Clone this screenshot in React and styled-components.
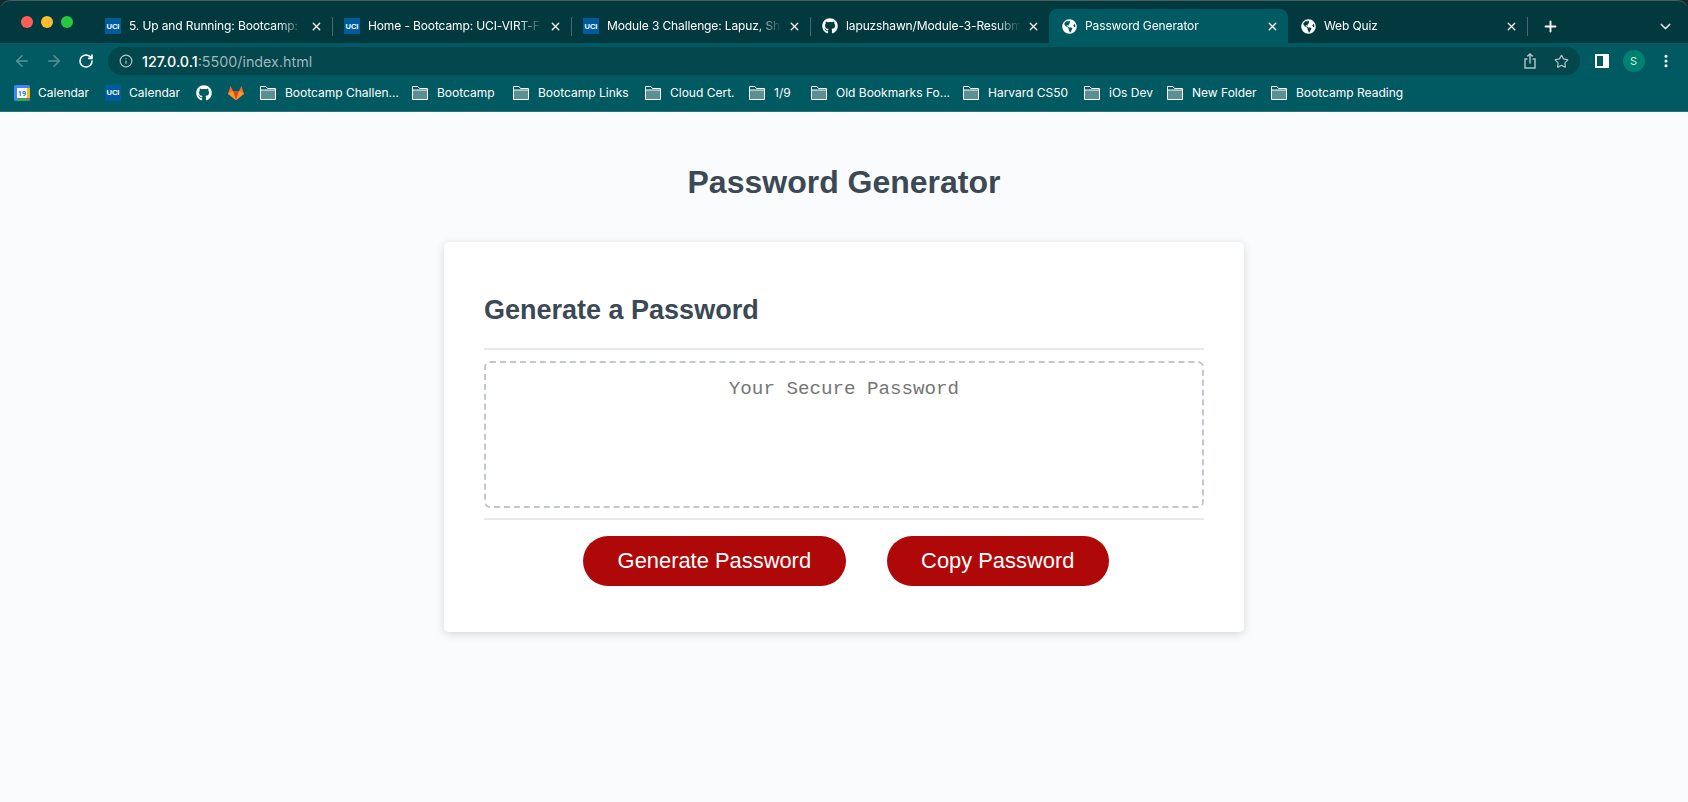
import styled, { createGlobalStyle } from 'styled-components';
import { ArrowLeft, ArrowRight, RotateCw, Info, Star, X, Plus, ChevronDown, EllipsisVertical } from 'lucide-react';
import { FaGithub, FaGlobeAmericas } from 'react-icons/fa';

const GlobalStyle = createGlobalStyle`
  html, body {
    margin: 0;
    padding: 0;
    background: #f9fbfd;
  }
  * {
    box-sizing: border-box;
  }
`;

const TABS = [
  { icon: 'uci', title: '5. Up and Running: Bootcamp:' },
  { icon: 'uci', title: 'Home - Bootcamp: UCI-VIRT-F' },
  { icon: 'uci', title: 'Module 3 Challenge: Lapuz, Sh' },
  { icon: 'github', title: 'lapuzshawn/Module-3-Resubm' },
  { icon: 'globe', title: 'Password Generator', active: true },
  { icon: 'globe', title: 'Web Quiz' },
];

const BOOKMARKS = [
  { icon: 'calendar', title: 'Calendar', width: 91 },
  { icon: 'uci', title: 'Calendar', width: 91 },
  { icon: 'github', width: 32 },
  { icon: 'gitlab', width: 32 },
  { icon: 'folder', title: 'Bootcamp Challen...', width: 152 },
  { icon: 'folder', title: 'Bootcamp', width: 101 },
  { icon: 'folder', title: 'Bootcamp Links', width: 132 },
  { icon: 'folder', title: 'Cloud Cert.', width: 104 },
  { icon: 'folder', title: '1/9', width: 62 },
  { icon: 'folder', title: 'Old Bookmarks Fo...', width: 152 },
  { icon: 'folder', title: 'Harvard CS50', width: 121 },
  { icon: 'folder', title: 'iOs Dev', width: 83 },
  { icon: 'folder', title: 'New Folder', width: 104 },
  { icon: 'folder', title: 'Bootcamp Reading' },
];

function FolderIcon() {
  return (
    <svg width="17" height="14" viewBox="0 0 17 14">
      <path d="M0.5 4 H15.5 V13.5 H0.5 Z" fill="#5b8f93" />
      <path d="M0.5 13.5 V0.5 H6 L7.5 2.5 H15.5 V13.5 Z M0.5 4 H15.5" fill="none" stroke="#ffffff" strokeWidth="1" />
    </svg>
  );
}

function GitlabIcon() {
  return (
    <svg width="16" height="16" viewBox="0 0 16 16">
      <path d="M8 15.2 L0.4 9.6 C0 9.3 -0.1 8.8 0.1 8.4 L2.6 1 L5 6.2 H11 L13.4 1 L15.9 8.4 C16.1 8.8 16 9.3 15.6 9.6 Z" fill="#fc6d26" />
      <path d="M8 15.2 L5 6.2 H11 Z" fill="#e24329" />
      <path d="M0.2 8.2 L5 6.2 L8 15.2 Z" fill="#fca326" opacity="0.85" />
      <path d="M15.8 8.2 L11 6.2 L8 15.2 Z" fill="#fca326" opacity="0.85" />
    </svg>
  );
}

function CalendarIcon() {
  return (
    <svg width="16" height="16" viewBox="0 0 16 16">
      <rect width="16" height="16" rx="1.5" fill="#4285f4" />
      <rect x="3" y="3" width="10" height="10" fill="#ffffff" />
      <path d="M3 13 H13 V16 H3 Z" fill="#34a853" />
      <path d="M13 3 H16 V13 H13 Z" fill="#fbbc04" />
      <path d="M13 13 H16 L13 16 Z" fill="#ea4335" />
      <text x="8" y="11" fontSize="7.5" fontWeight="700" textAnchor="middle" fontFamily="Roboto, sans-serif" fill="#1a73e8">19</text>
    </svg>
  );
}

function ShareIcon() {
  return (
    <svg width="14" height="16" viewBox="0 0 14 16" fill="none" stroke="#a9bfc2" strokeWidth="1.5">
      <path d="M4.5 6 H2 V15 H12 V6 H9.5" />
      <path d="M7 10.5 V1 M4.3 3.4 L7 1 L9.7 3.4" />
    </svg>
  );
}

function SidePanelIcon() {
  return (
    <svg width="14" height="14" viewBox="0 0 14 14">
      <path fillRule="evenodd" d="M0 0 H14 V14 H0 Z M2 2 V12 H8 V2 Z" fill="#ffffff" />
    </svg>
  );
}

function renderIcon(icon) {
  switch (icon) {
    case 'uci':
      return <UciBadge>UCI</UciBadge>;
    case 'github':
      return <FaGithub size={16} color="#ffffff" />;
    case 'globe':
      return <FaGlobeAmericas size={15} color="#ffffff" />;
    case 'gitlab':
      return <GitlabIcon />;
    case 'calendar':
      return <CalendarIcon />;
    default:
      return <FolderIcon />;
  }
}

export default function App() {
  return (
    <>
      <GlobalStyle />
      <Chrome>
        <TabStrip>
          <Lights>
            <Light $color="#ff5f57" />
            <Light $color="#febc2e" />
            <Light $color="#28c840" />
          </Lights>
          {TABS.map((tab, i) => (
            <Tab key={tab.title} $active={tab.active} $divider={i > 0 && !tab.active && !TABS[i - 1].active}>
              <TabIcon>{renderIcon(tab.icon)}</TabIcon>
              <TabTitle>{tab.title}</TabTitle>
              <X size={13} color="#ffffff" strokeWidth={2.4} />
            </Tab>
          ))}
          <NewTab>
            <Plus size={17} color="#ffffff" strokeWidth={2.6} />
          </NewTab>
          <TabMenu>
            <ChevronDown size={17} color="#d5e2e3" strokeWidth={2} />
          </TabMenu>
        </TabStrip>

        <Toolbar>
          <NavButton><ArrowLeft size={18} color="#5c9196" strokeWidth={2} /></NavButton>
          <NavButton><ArrowRight size={18} color="#5c9196" strokeWidth={2} /></NavButton>
          <NavButton><RotateCw size={16} color="#ffffff" strokeWidth={2.4} /></NavButton>
          <AddressBar>
            <Info size={14} color="#b5c8ca" strokeWidth={2} />
            <Url><strong>127.0.0.1</strong>:5500/index.html</Url>
            <AddressActions>
              <ShareIcon />
              <Star size={15} color="#a9bfc2" strokeWidth={2} />
            </AddressActions>
          </AddressBar>
          <ToolbarEnd>
            <SidePanelIcon />
            <Avatar>S</Avatar>
            <EllipsisVertical size={16} color="#ffffff" strokeWidth={2.6} />
          </ToolbarEnd>
        </Toolbar>

        <BookmarkBar>
          {BOOKMARKS.map((b, i) => (
            <Bookmark key={i} $width={b.width}>
              {renderIcon(b.icon)}
              {b.title && <span>{b.title}</span>}
            </Bookmark>
          ))}
        </BookmarkBar>
      </Chrome>

      <Page>
        <Title>Password Generator</Title>
        <Card>
          <CardTitle>Generate a Password</CardTitle>
          <CardBody>
            <PasswordBox readOnly placeholder="Your Secure Password" />
          </CardBody>
          <CardFooter>
            <RedButton>Generate Password</RedButton>
            <RedButton>Copy Password</RedButton>
          </CardFooter>
        </Card>
      </Page>
    </>
  );
}

const Chrome = styled.header`
  background: #15292c;
  font-family: Inter, 'Liberation Sans', sans-serif;
  color: #ffffff;
`;

const TabStrip = styled.div`
  display: flex;
  align-items: flex-end;
  height: 43px;
  background: #02393f;
  border-top: 1px solid #4a5a5e;
  border-radius: 10px 10px 0 0;
`;

const Lights = styled.div`
  display: flex;
  align-self: flex-start;
  gap: 8px;
  width: 93px;
  padding: 15px 0 0 21px;
`;

const Light = styled.span`
  width: 12px;
  height: 12px;
  border-radius: 50%;
  background: ${p => p.$color};
`;

const Tab = styled.div`
  position: relative;
  display: flex;
  align-items: center;
  width: 239px;
  height: 34px;
  padding: 0 9px 0 12px;
  border-radius: ${p => (p.$active ? '8px 8px 0 0' : '0')};
  background: ${p => (p.$active ? '#015a62' : 'transparent')};

  ${p => p.$divider && `
    &::before {
      content: '';
      position: absolute;
      left: 0;
      top: 8px;
      height: 19px;
      width: 1px;
      background: #47696d;
    }
  `}
`;

const TabIcon = styled.span`
  display: flex;
  align-items: center;
  justify-content: center;
  width: 16px;
  height: 16px;
  flex: none;
  margin-right: 8px;
`;

const TabTitle = styled.span`
  flex: 1;
  min-width: 0;
  margin-right: 6px;
  font-size: 12px;
  line-height: 16px;
  letter-spacing: -0.01em;
  white-space: nowrap;
  overflow: hidden;
  -webkit-mask-image: linear-gradient(to right, #000 85%, transparent 100%);
  mask-image: linear-gradient(to right, #000 85%, transparent 100%);
`;

const NewTab = styled.div`
  position: relative;
  display: flex;
  align-items: center;
  justify-content: center;
  width: 46px;
  height: 34px;

  &::before {
    content: '';
    position: absolute;
    left: 0;
    top: 8px;
    height: 19px;
    width: 1px;
    background: #47696d;
  }
`;

const TabMenu = styled.div`
  display: flex;
  align-items: center;
  justify-content: flex-end;
  flex: 1;
  height: 34px;
  padding-right: 14px;
`;

const UciBadge = styled.span`
  display: flex;
  align-items: center;
  justify-content: center;
  flex: none;
  width: 16px;
  height: 16px;
  background: #005c9e;
  color: #ffffff;
  font-family: 'Liberation Sans', sans-serif;
  font-size: 7.5px;
  font-weight: 700;
`;

const Toolbar = styled.div`
  display: flex;
  align-items: center;
  height: 36px;
  background: #015a62;
  padding-left: 6px;
`;

const NavButton = styled.div`
  display: flex;
  align-items: center;
  justify-content: center;
  width: 32px;
  height: 28px;
`;

const AddressBar = styled.div`
  display: flex;
  align-items: center;
  width: 1472px;
  height: 28px;
  margin-left: 6px;
  padding: 0 11px;
  border-radius: 14px;
  background: #03474d;
`;

const Url = styled.span`
  flex: 1;
  margin-left: 9px;
  font-size: 14.3px;
  color: #9cb6b9;

  strong {
    font-weight: 500;
    color: #ffffff;
  }
`;

const AddressActions = styled.div`
  display: flex;
  align-items: center;
  gap: 17px;
`;

const ToolbarEnd = styled.div`
  display: flex;
  align-items: center;
  flex: 1;
  padding-left: 15px;
  gap: 13.5px;
`;

const Avatar = styled.span`
  display: flex;
  align-items: center;
  justify-content: center;
  width: 22px;
  height: 22px;
  border-radius: 50%;
  background: #00806f;
  color: #d8ece8;
  font-size: 11px;
`;

const BookmarkBar = styled.div`
  display: flex;
  align-items: center;
  height: 33px;
  background: #015a62;
  border-bottom: 1px solid #2e7479;
  padding: 0 0 5px 14px;
`;

const Bookmark = styled.div`
  display: flex;
  align-items: center;
  flex: none;
  gap: 8px;
  width: ${p => (p.$width ? `${p.$width}px` : 'auto')};
  font-size: 12px;
  white-space: nowrap;
`;

const Page = styled.main`
  display: flex;
  flex-direction: column;
  align-items: center;
  min-height: 690px;
  background: #f9fbfd;
  font-family: 'Liberation Sans', sans-serif;
  color: #3b4954;
`;

const Title = styled.h1`
  margin: 0;
  padding: 50px 0 39px;
  font-size: 32px;
  line-height: 41px;
  font-weight: 700;
`;

const Card = styled.section`
  width: 800px;
  height: 390px;
  padding: 40px;
  border-radius: 5px;
  background: #ffffff;
  box-shadow: rgba(0, 0, 0, 0.15) 0 2px 8px;
`;

const CardTitle = styled.h2`
  margin: 0;
  height: 66px;
  padding-top: 12px;
  font-size: 27px;
  line-height: 32px;
  font-weight: 700;
`;

const CardBody = styled.div`
  height: 172px;
  padding: 11px 0 10px;
  border-top: 2px solid #e8e9eb;
  border-bottom: 2px solid #e8e9eb;
`;

const PasswordBox = styled.textarea`
  display: block;
  width: 100%;
  height: 147px;
  padding: 14px;
  border: 2px dashed #c0c7cf;
  border-radius: 6px;
  outline: none;
  resize: none;
  text-align: center;
  font-family: 'Liberation Mono', monospace;
  font-size: 19.2px;
  line-height: 24px;

  &::placeholder {
    color: #757575;
    opacity: 1;
  }
`;

const CardFooter = styled.div`
  display: flex;
  justify-content: center;
  gap: 41px;
  padding: 16px 0 0 4px;
`;

const RedButton = styled.button`
  height: 50px;
  padding: 0 34.5px;
  border: none;
  border-radius: 25px;
  background: #af0808;
  color: #ffffff;
  font-family: 'Liberation Sans', sans-serif;
  font-size: 21.9px;
`;
